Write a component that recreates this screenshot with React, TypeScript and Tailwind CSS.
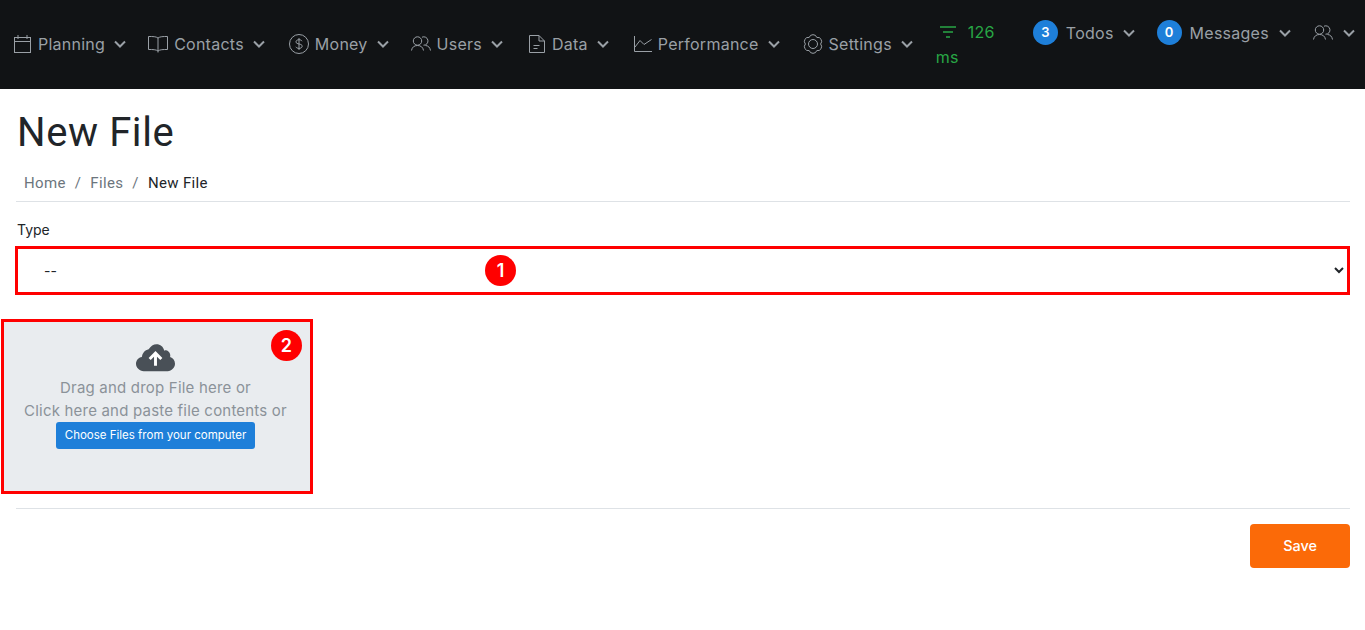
import type { ReactNode } from "react"

const icon = "fill-none stroke-[#9aa0a6] stroke-1"

const Chevron = ({ className = "" }: { className?: string }) => (
  <svg width="12" height="8" viewBox="0 0 12 8" className={`fill-none stroke-[#9aa0a6] stroke-2 ${className}`}>
    <path d="M1 1.500l5 5 5-5" />
  </svg>
)

const CalendarIcon = () => (
  <svg width="19" height="20" viewBox="0 0 19 20" className={icon}>
    <rect x="1.500" y="3.500" width="16" height="15" />
    <path d="M1.500 7.500h16M5 1v4M14 1v4" />
  </svg>
)

const BookIcon = () => (
  <svg width="20" height="18" viewBox="0 0 20 18" className={icon}>
    <path d="M10 3C8 1.500 5 1.500.5 1.500v13c4.500 0 7.500 0 9.500 1.500 2-1.500 5-1.500 9.500-1.500v-13C15 1.500 12 1.500 10 3zM10 3v14.500" />
  </svg>
)

const MoneyIcon = () => (
  <svg width="20" height="20" viewBox="0 0 20 20" className={icon}>
    <circle cx="10" cy="10" r="9.500" />
    <path d="M13 7.200C12.500 6.200 11.300 5.700 10 5.700c-1.700 0-3 .8-3 2.200 0 2.900 6.200 1.300 6.200 4.300 0 1.300-1.400 2.200-3.200 2.200-1.400 0-2.600-.6-3.200-1.600M10 4v12" />
  </svg>
)

const UsersIcon = () => (
  <svg width="20" height="16" viewBox="0 0 20 16" className={icon}>
    <circle cx="6.500" cy="5" r="4.200" />
    <path d="M11 1.200A4.200 4.200 0 1 1 12.500 9.200M.5 14.500C1 11 3.500 9.500 6.500 9.500S12 11 12.500 14.500M14.500 9.500c2.800.2 4.500 2 5 5" />
  </svg>
)

const FileIcon = () => (
  <svg width="18" height="18" viewBox="0 0 18 18" className={icon}>
    <path d="M.5.500H10L15.500 6v11.500H.5zM10 .5V6h5.500M4.500 10.500h6M4.500 13.500h4" />
  </svg>
)

const ChartIcon = () => (
  <svg width="18" height="16" viewBox="0 0 18 16" className={icon}>
    <path d="M.5 0v15.500H18M1 11l5-6.500 4 4L17.500 3.500" />
  </svg>
)

const GearIcon = () => (
  <svg width="20" height="20" viewBox="0 0 20 20" className={icon}>
    <path d="M6.200 3.420A4 4 0 0 1 13.800 3.420A4 4 0 0 1 17.600 10A4 4 0 0 1 13.800 16.580A4 4 0 0 1 6.200 16.580A4 4 0 0 1 2.400 10A4 4 0 0 1 6.200 3.420z" />
    <circle cx="10" cy="10" r="4.500" />
  </svg>
)

const FilterIcon = () => (
  <svg width="16" height="14" viewBox="0 0 16 14" className="fill-none stroke-[#28a745] stroke-[1.5]">
    <path d="M0 2h16M3 7h10M6 12h4" />
  </svg>
)

function MenuItem({ icon, label, className = "" }: { icon: ReactNode; label: string; className?: string }) {
  return (
    <div className={`flex items-center ${className}`}>
      {icon}
      <span className="ml-[6px]">{label}</span>
      <Chevron className="ml-[9px]" />
    </div>
  )
}

function Badge({ n }: { n: number }) {
  return (
    <span className="flex h-[25px] w-[25px] items-center justify-center rounded-full bg-[#1e7fd9] text-[13px] font-semibold tracking-normal text-white">
      {n}
    </span>
  )
}

function Marker({ n, className }: { n: number; className: string }) {
  return (
    <span className={`absolute flex h-[31px] w-[31px] items-center justify-center rounded-full bg-[#ff0000] text-[18px] font-semibold text-white ${className}`}>
      {n}
    </span>
  )
}

export default function App() {
  return (
    <div className="min-h-screen bg-white font-['Inter',sans-serif] text-[#212529]">
      <nav className="flex h-[89px] items-start bg-[#111315] text-[16px] tracking-[0.25px] text-[#9aa0a6]">
        <div className="flex items-center pl-[13px] pt-[32px]">
          <MenuItem icon={<CalendarIcon />} label="Planning" className="-mr-[1px]" />
          <MenuItem icon={<BookIcon />} label="Contacts" className="ml-[23px]" />
          <MenuItem icon={<MoneyIcon />} label="Money" className="ml-[24px]" />
          <MenuItem icon={<UsersIcon />} label="Users" className="ml-[22px]" />
          <div className="ml-[26px] flex items-center">
            <FileIcon />
            <span className="ml-[5px]">Data</span>
            <Chevron className="ml-[9px]" />
          </div>
          <MenuItem icon={<ChartIcon />} label="Performance" className="ml-[25px]" />
          <MenuItem icon={<GearIcon />} label="Settings" className="ml-[23px]" />
        </div>
        <div className="ml-[23px] w-[70px] pt-[20px] leading-[24px] text-[#28a745]">
          <span className="ml-[4px] inline-flex items-center gap-[12px]">
            <FilterIcon />
            126
          </span>
          <br />
          ms
        </div>
        <div className="ml-[27px] flex items-center gap-[22px] pt-[20px]">
          <div className="flex items-center">
            <Badge n={3} />
            <span className="ml-[8px]">Todos</span>
            <Chevron className="ml-[9px]" />
          </div>
          <div className="flex items-center">
            <Badge n={0} />
            <span className="ml-[8px]">Messages</span>
            <Chevron className="ml-[10px]" />
          </div>
          <div className="flex items-center">
            <UsersIcon />
            <Chevron className="ml-[10px]" />
          </div>
        </div>
      </nav>

      <main className="pl-[16px] pr-[15px]">
        <h1 className="pl-[1px] pt-[20px] font-['Roboto',sans-serif] text-[40px] font-normal leading-[48px] tracking-[0.6px]">New File</h1>
        <ol className="mt-[14px] flex items-center pl-[8px] font-['Roboto',sans-serif] text-[15px] leading-[24px] tracking-[0.35px] text-[#6c757d]">
          <li>Home</li>
          <li className="px-[9px]">/</li>
          <li>Files</li>
          <li className="px-[9px]">/</li>
          <li className="text-[#212529]">New File</li>
        </ol>
        <hr className="mt-[6px] border-[#dee2e6]" />
        <label className="mt-[18px] block pl-[1px] text-[14px] leading-[20px]">Type</label>
        <div className="relative -ml-[1px] mt-[6px]">
          <select className="block h-[49px] w-full border-[3px] border-[#ff0000] bg-white pl-[22px] text-[14px] text-[#212529]">
            <option>--</option>
          </select>
          <Marker n={1} className="left-[470px] top-[9px]" />
        </div>
        <div className="relative -ml-[15px] mt-[24px] flex h-[175px] w-[312px] flex-col items-center border-[3px] border-[#ff0000] bg-[#e9ecef] pr-[3px] pt-[22px] text-[15px] leading-[23px] tracking-[0.2px] text-[#8b9299]">
          <svg width="39" height="28" viewBox="0 0 40 28" className="mb-[4px]">
            <path d="M8 27.500C3.500 27.500 0 24 0 20c0-3.500 2.500-6.500 6-7 .5-4 3-7 7-8C15 2 18 0 21 0c4 0 7 2.500 8 6.500 1-.5 3-.5 4 .5 2 1.500 2.500 4 2 6 3 1 5 3.500 5 7 0 4-3.500 7.500-7.500 7.500z" fill="#495057" />
            <path d="M20 22V10M14 15l6-6 6 6" fill="none" stroke="#fff" strokeWidth="3" />
          </svg>
          <p>Drag and drop File here or</p>
          <p>Click here and paste file contents or</p>
          <button className="h-[27px] w-[199px] rounded-[3px] bg-[#1e7fd9] text-[11.500px] tracking-normal text-white">
            Choose Files from your computer
          </button>
          <Marker n={2} className="left-[267px] top-[8px]" />
        </div>
        <hr className="mt-[14px] border-[#dee2e6]" />
        <div className="mt-[15px] flex justify-end">
          <button className="h-[44px] w-[100px] rounded-[4px] bg-[#fb6a08] pb-[1px] text-[14.400px] font-medium text-white">
            Save
          </button>
        </div>
      </main>
    </div>
  )
}
